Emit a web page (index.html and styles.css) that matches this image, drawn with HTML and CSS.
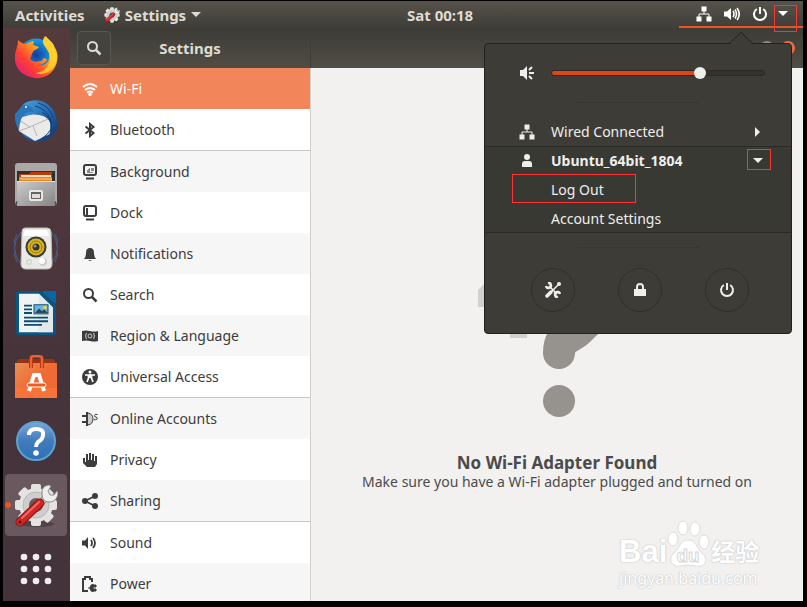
FILE: index.html
```html
<!DOCTYPE html>
<html lang="en">
<head>
<meta charset="utf-8">
<title>Settings</title>
<link rel="stylesheet" href="styles.css">
</head>
<body>
<svg class="defs" aria-hidden="true">
  <defs>
    <symbol id="gear" viewBox="0 0 44 44">
      <ellipse cx="23" cy="41" rx="17" ry="3" fill="#000" opacity=".25"/>
      <g fill="#e4e3e1">
        <circle cx="22" cy="22" r="17"/>
        <g id="teeth"><rect x="17" y="1" width="10" height="42" rx="2"/><rect x="1" y="17" width="42" height="10" rx="2"/></g>
        <use href="#teeth" transform="rotate(45 22 22)"/>
      </g>
      <circle cx="22" cy="22" r="13" fill="#cfcecd" stroke="#b9b8b6"/>
      <circle cx="22" cy="22" r="7" fill="#6a5a60"/>
      <path d="M25 22 35 11" stroke="#8e8c89" stroke-width="7"/>
      <path d="M25 22 35 11" stroke="#eeeeec" stroke-width="5"/>
      <path d="M28 11q-1-8 7-9l2 1-3 5 2 4 4 0 3-4 1 1q0 8-7 10-9 1-9-8z" fill="#eeeeec" stroke="#8e8c89"/>
      <path d="M6 39 26 20" stroke="#8d1111" stroke-width="9" stroke-linecap="round"/>
      <path d="M6 39 26 20" stroke="#cf2626" stroke-width="7" stroke-linecap="round"/>
      <path d="M8 35 25 19" stroke="#ef6a62" stroke-width="2" stroke-linecap="round"/>
      <circle cx="6" cy="39" r="1.500" fill="#6b0c0c"/>
    </symbol>
    <symbol id="net" viewBox="0 0 16 16"><path d="M5.500 0.500h5v5h-5zM0.500 10.500h5v5h-5zM10.500 10.500h5v5h-5z" fill="currentColor"/><path d="M8 5v3M3 11V8h10v3" fill="none" stroke="currentColor"/></symbol>
    <symbol id="power" viewBox="0 0 16 16"><path d="M4.800 3a6 6 0 1 0 6.400 0M8 1v7" fill="none" stroke="currentColor" stroke-width="2"/></symbol>
    <symbol id="search" viewBox="0 0 16 16"><circle cx="6.500" cy="6.500" r="4.500" fill="none" stroke="currentColor" stroke-width="2"/><path d="m10 10 4.500 4.500" stroke="currentColor" stroke-width="2.500"/></symbol>
    <symbol id="volume" viewBox="0 0 16 16"><path d="M0 5.500h3L7 2v12l-4-3.500H0z" fill="currentColor"/><path d="M9 5q2 3 0 6M11 3.500q3 4.500 0 9M13 2q4.500 6 0 12" fill="none" stroke="currentColor" stroke-width="1.600"/></symbol>
  </defs>
</svg>

<div class="screen">
  <header class="topbar">
    <div class="topbar-left">
      <button class="bar-button" type="button">Activities</button>
      <button class="bar-button app-menu" type="button"><svg class="icon"><use href="#gear"/></svg>Settings<span class="arrow-down"></span></button>
    </div>
    <button class="bar-button" type="button">Sat 00:18</button>
    <button class="status" type="button" aria-label="System menu">
      <svg class="icon"><use href="#net"/></svg>
      <svg class="icon"><use href="#volume"/></svg>
      <svg class="icon"><use href="#power"/></svg>
      <span class="arrow-down"></span>
      <span class="mark mark-status"></span>
    </button>
  </header>

  <div class="desktop">
    <nav class="dock" aria-label="Dock">
      <a href="#firefox" aria-label="Firefox"><svg viewBox="0 0 44 44">
        <defs><linearGradient id="ff" x1="1" y1="0" x2="0" y2="1"><stop offset="0" stop-color="#fff04a"/><stop offset=".35" stop-color="#ffb01e"/><stop offset=".65" stop-color="#ff4133"/><stop offset="1" stop-color="#d5118f"/></linearGradient>
        <radialGradient id="ffb"><stop offset="0" stop-color="#173a9c"/><stop offset="1" stop-color="#159fe8"/></radialGradient></defs>
        <circle cx="22" cy="20" r="16.500" fill="url(#ffb)"/>
        <path d="M4 5c2 2 5 4 8 4 3-1 5-3 8-3l-1 4c2 1 4 1 6 2-2 3-6 3-6 5-2 2-1 5-3 6 2 5 8 4 13 2l-1-1c3-2 5 0 5 1-2 3-6 6-12 5 10 3 16-4 14-12-1-7-8-8-5-14 0-1 1-2 2-3 2 4 7 5 9 12 4 6 3 15-1 21-5 8-15 11-24 8C6 39 0 31 1 21 1 15 4 13 4 5z" fill="url(#ff)"/>
        <path d="M31 1c-7 9 6 13 5 23-1 9-8 14-15 14 8 3 18-1 21-11 3-15-11-16-11-26z" fill="#ffd42e" opacity=".8"/>
      </svg></a>
      <a href="#mail" aria-label="Thunderbird"><svg viewBox="0 0 44 44">
        <defs><linearGradient id="tb" x2="1" y2="1"><stop stop-color="#49a4e0"/><stop offset=".5" stop-color="#2469b1"/><stop offset="1" stop-color="#102c61"/></linearGradient></defs>
        <path d="M10 5C17-1 30 0 37 8c8 9 7 23-1 30-7 6-19 7-26-1C0 28 2 12 10 5z" fill="url(#tb)"/>
        <path d="m2 20 17-5 18 3-1 17-15 7L5 32z" fill="#eceae8"/>
        <path d="m3 20 13 8 20-9M5 32l11-4M19 27l4 10" fill="none" stroke="#b5b2b0"/>
        <path d="M11 4c8-5 24-1 30 12 7 14-1 25-19 27 9-2 13-5 14-10 3-8-1-15-10-17-6-2-11 1-16 0C6 14 6 8 11 4z" fill="url(#tb)"/>
        <path d="M1 15 9 6q8-1 11 7-6-1-10 3-4 3-5 15-5-8-4-16z" fill="#2b75b9"/>
        <path d="M24 4c8 2 13 8 15 15M21 7c8 2 15 8 17 18M28 13c6 4 10 9 9 17M37 30q-3 6-10 10" fill="none" stroke="#0f4078"/>
        <circle cx="12" cy="8" r="1" fill="#fff"/>
      </svg></a>
      <a href="#files" aria-label="Files"><svg viewBox="0 0 44 44">
        <defs><linearGradient id="fl" x2="1" y2="1"><stop stop-color="#ccc"/><stop offset="1" stop-color="#858585"/></linearGradient></defs>
        <path d="M1 3q0-3 3-3h36q3 0 3 3v38H1z" fill="#aaa9a7"/><path d="M3 8h38v12H3z" fill="#30302f"/>
        <path d="M5 13v-2h10l2-2h21v11H5z" fill="#b93d0c"/><path d="M5 14h33v6H5z" fill="#f58220"/><path d="M7 12h30v2H7z" fill="#ffe2bd"/><path d="M6 16h32" stroke="#ffd098"/>
        <path d="M3 18h38v25H3z" fill="url(#fl)"/><path d="M3 18.500h38" stroke="#e7e7e6"/><path d="M1 41h2v-3M43 41h-2v-3" stroke="#777"/>
        <rect x="15" y="27" width="14" height="11" rx="2" fill="#e8e8e7"/><rect x="17" y="29" width="10" height="7" fill="#656462"/><path d="M18 31h8v4h-8z" fill="#dededd"/>
      </svg></a>
      <a href="#music" aria-label="Rhythmbox"><svg viewBox="0 0 44 44">
        <g fill="none" stroke="#48608e"><path d="M7 5q-13 16 0 32M3 7q-7 14 0 28M37 5q13 16 0 32M41 7q7 14 0 28"/></g>
        <path d="M11 1h22q4 0 4 4l1 32q0 5-5 5H12q-5 0-5-5L8 5q0-4 3-4z" fill="#e9e9e7" stroke="#bdbdbb"/>
        <path d="M11 3h22l2 6H9z" fill="#fff"/><circle cx="22" cy="20" r="10.500" fill="#383a37"/><circle cx="22" cy="20" r="8.500" fill="#d9b51c"/><circle cx="22" cy="20" r="6" fill="none" stroke="#96780d"/><circle cx="22" cy="20" r="3.500" fill="#333"/><circle cx="21" cy="19" r="1.500" fill="#999"/>
        <circle cx="29" cy="35" r="4" fill="#ccc"/><circle cx="28" cy="34" r="3" fill="#fff"/><rect x="13" y="33" width="4" height="4" fill="none" stroke="#ccc"/>
      </svg></a>
      <a href="#writer" aria-label="LibreOffice Writer"><svg viewBox="0 0 44 48" preserveAspectRatio="none">
        <path d="M4 0h23l15 16v29q0 3-3 3H5q-3 0-3-3V2q0-2 2-2z" fill="#0b5680"/><path d="M5 3h20l14 15v27H5z" fill="#f0f3f4"/><path d="M25 3 39 18v27H24z" fill="#dce1e4" opacity=".6"/>
        <path d="M29 0h13v14q-2 0-4-3l-8-8q-2-2-1-3z" fill="#0568a5"/>
        <path d="M10 16h8M10 20h8M10 24h8M10 29h24M10 33h24M10 37h18" stroke="#094c75" stroke-width="2"/><rect x="20" y="15" width="14" height="10" fill="#67b5de" stroke="#094c75"/><path d="m21 24 4-5 3 3 2-2 4 4z" fill="#26485a"/><circle cx="31" cy="18" r="2" fill="#f1cf45"/>
      </svg></a>
      <a href="#software" aria-label="Ubuntu Software"><svg viewBox="0 0 44 44">
        <defs><linearGradient id="sw" x1="0" x2="1" y2="1"><stop stop-color="#e99154"/><stop offset=".5" stop-color="#f16a35"/><stop offset="1" stop-color="#f26a2e"/></linearGradient></defs>
        <path d="m3 6 2-2h34l2 2v4H3z" fill="#993314"/><path d="M1 8h42v35H1z" fill="url(#sw)"/><path d="M1 33h42v10H1z" fill="#ff7b3e" opacity=".5"/>
        <path d="M17 13V4q0-3 3-3h4q4 0 4 3v9" fill="none" stroke="#bd3710" stroke-width="4"/><path d="M17 13V4q0-3 3-3h4q4 0 4 3v9" fill="none" stroke="#ee6533" stroke-width="2"/>
        <path d="m15 36 5-16h5l5 16" fill="none" stroke="#fff" stroke-width="4"/><rect x="13" y="28" width="19" height="4" rx="2" fill="#f35b1c" stroke="#fff"/>
      </svg></a>
      <a href="#help" aria-label="Help"><svg viewBox="0 0 44 44">
        <defs><linearGradient id="hp" x2="0" y2="1"><stop stop-color="#7ca6da"/><stop offset=".5" stop-color="#427bbb"/><stop offset="1" stop-color="#2b71b8"/></linearGradient></defs>
        <circle cx="22" cy="22" r="19" fill="url(#hp)" stroke="#5ca4ce" stroke-width="2"/><path d="M15 16q0-6 7-6 8 0 7 6 0 4-5 7-2 2-2 5" fill="none" stroke="#fff" stroke-width="4"/><circle cx="22" cy="34" r="2.800" fill="#fff"/>
      </svg></a>
      <a class="active" href="#settings" aria-label="Settings"><svg><use href="#gear"/></svg></a>
      <a href="#apps" aria-label="Show applications"><svg viewBox="0 0 44 44" fill="#f0eded"><g id="dots"><circle cx="10" cy="10" r="3.300"/><circle cx="22" cy="10" r="3.300"/><circle cx="34" cy="10" r="3.300"/></g><use href="#dots" y="12"/><use href="#dots" y="24"/></svg></a>
    </nav>

    <main class="window">
      <div class="titlebar">
        <div class="side-title">
          <button class="search-button" type="button" aria-label="Search"><svg class="icon"><use href="#search"/></svg></button>
          <h1>Settings</h1>
        </div>
        <div class="window-controls"><button type="button" aria-label="Maximize"></button><button class="close" type="button" aria-label="Close"></button></div>
      </div>
      <div class="panes">
        <nav class="sidebar" aria-label="Settings">
          <a class="selected" href="#wifi"><svg class="icon" viewBox="0 0 16 16"><path d="M1 6q7-6 14 0M3 9q5-4 10 0M5 11.500q3-2 6 0" fill="none" stroke="currentColor" stroke-width="1.800"/><circle cx="8" cy="13.500" r="1.800" fill="currentColor"/></svg>Wi-Fi</a>
          <a href="#bluetooth"><svg class="icon" viewBox="0 0 16 16"><path d="m3.500 4.500 8 6.500L8 14V2l3.500 3-8 6.500" fill="none" stroke="currentColor" stroke-width="2"/></svg>Bluetooth</a>
          <a class="group odd" href="#background"><svg class="icon" viewBox="0 0 16 16"><rect x="2" y="1" width="12" height="10" rx="2" fill="none" stroke="currentColor" stroke-width="2"/><path d="M4 14.500h8" stroke="currentColor" stroke-width="2"/><path d="M5 8V6h1V5h1V4h1v4zM9 4h3v3H9z" fill="#888"/><path d="M5 8.500h6" stroke="#888"/></svg>Background</a>
          <a href="#dock"><svg class="icon" viewBox="0 0 16 16"><rect x="2" y="1" width="12" height="10" rx="2" fill="none" stroke="currentColor" stroke-width="2"/><path d="M5 3v7M4 14.500h8" stroke="currentColor" stroke-width="2"/></svg>Dock</a>
          <a class="odd" href="#notifications"><svg class="icon" viewBox="0 0 16 16"><path d="M2 13q2-2 2-6 0-5 4-5t4 5q0 4 2 6zM6 14h4l-2 1z" fill="currentColor"/></svg>Notifications</a>
          <a href="#search-settings"><svg class="icon"><use href="#search"/></svg>Search</a>
          <a class="odd" href="#region"><svg class="icon" viewBox="0 0 16 16"><path d="M0 3q4-1 8 0t8 0v10q-4 1-8 0t-8 0z" fill="currentColor"/><circle cx="8" cy="8" r="2" fill="none" stroke="#ccc"/><path d="M4.500 5q-2 3 0 6M11.500 5q2 3 0 6" fill="none" stroke="#ccc"/></svg>Region &amp; Language</a>
          <a href="#access"><svg class="icon" viewBox="0 0 16 16"><circle cx="8" cy="8" r="8" fill="currentColor"/><circle cx="8" cy="3" r="1.500" fill="#fff"/><path d="M3 6h10M8 5v4M6.500 6v3L5 13M9.500 6v3l1.500 4" fill="none" stroke="#fff" stroke-width="1.700"/></svg>Universal Access</a>
          <a class="group odd" href="#accounts"><svg class="icon" viewBox="0 0 16 16"><path d="M4 1h2v14H4zM0 4h4v2H0zM0 10h4v2H0z" fill="currentColor"/><path d="M6 2q5 1 5 6t-5 6" fill="#ccc" stroke="currentColor"/><path d="M15.500 3.500q-3-1-3 1t2.500 2q1 3-3 2" fill="none" stroke="currentColor"/></svg>Online Accounts</a>
          <a href="#privacy"><svg class="icon" viewBox="0 0 16 16"><path d="M1 6h2v4h1V2h2v6h1V1h2v7h1V2h2v7h1V4h2v8l-2 3H5l-4-4z" fill="currentColor"/></svg>Privacy</a>
          <a class="odd" href="#sharing"><svg class="icon" viewBox="0 0 16 16"><g fill="currentColor"><circle cx="3" cy="8" r="3"/><circle cx="13" cy="3" r="3"/><circle cx="13" cy="13" r="3"/></g><path d="M13 3 3 8l10 5" fill="none" stroke="currentColor" stroke-width="1.800"/></svg>Sharing</a>
          <a class="group" href="#sound"><svg class="icon" viewBox="0 0 16 16"><path d="M0 5.500h3L6 2v12l-3-3.500H0z" fill="currentColor"/><path d="M9 5q2 3 0 6M11 3q4 5 0 10" fill="none" stroke="currentColor" stroke-width="1.800"/></svg>Sound</a>
          <a class="odd" href="#power-settings"><svg class="icon" viewBox="0 0 16 16"><path d="M6 15H1V3h2V1h5v2h2v3" fill="none" stroke="currentColor" stroke-width="2"/><path d="M9 12H6M11 8v8q-3-1-3-4t3-4zM11 9h3v2h-3zM11 13h3v2h-3z" fill="currentColor" stroke="currentColor"/></svg>Power</a>
        </nav>
        <section class="content">
          <svg class="illustration" viewBox="0 0 160 160" aria-hidden="true">
            <path d="M1 31 21 12v36H1zM33 40h17v39H33z" fill="#d1d0ce"/>
            <path d="M66 94c0-18 8-27 19-36 13-10 20-16 20-28H73V0h25c28 0 43 15 43 36 0 22-15 34-27 46-8 8-16 10-16 12a16 16 0 0 1-32 0z" fill="#96938f"/>
            <circle cx="82" cy="142" r="16" fill="#96938f"/>
          </svg>
          <h2>No Wi-Fi Adapter Found</h2>
          <p>Make sure you have a Wi-Fi adapter plugged and turned on</p>
        </section>
      </div>
    </main>
  </div>

  <div class="watermark">
    <div class="brand"><span>Bai</span><svg viewBox="0 0 44 48" aria-hidden="true"><g fill="#fff" stroke="#dcdcda"><ellipse cx="6" cy="19" rx="5" ry="7"/><ellipse cx="16" cy="8" rx="5" ry="7"/><ellipse cx="28" cy="9" rx="5" ry="7"/><ellipse cx="37" cy="22" rx="5" ry="7"/><path d="M21 20c8 0 9 8 14 13 8 7 2 15-6 13q-8-2-15 0c-9 2-14-7-7-13 6-5 6-13 14-13z"/></g><text x="21" y="42" text-anchor="middle">du</text></svg><span class="cjk">经验</span></div>
    <div class="domain">jingyan.baidu.com</div>
  </div>

  <section class="popup" aria-label="System menu">
    <svg class="pointer" viewBox="0 0 26 13" aria-hidden="true"><path d="M0 12.500h1L13 1l12 11.500h1V13H0z" fill="#3e3c37"/><path d="M0 11.500h1L13 .5l12 11h1" fill="none" stroke="#22211f"/></svg>
    <div class="volume-row">
      <svg class="icon" viewBox="0 0 16 16"><path d="M1 5h3l4-4v14l-4-4H1z" fill="currentColor"/><path d="M10 8h5M10 5l3-3M10 11l3 3" stroke="currentColor" stroke-width="2"/></svg>
      <input type="range" min="0" max="100" value="71" aria-label="Volume">
    </div>
    <hr>
    <button class="item" type="button"><svg class="icon"><use href="#net"/></svg><span>Wired Connected</span><i class="arrow-right"></i></button>
    <div class="user-menu">
      <button class="item user" type="button"><svg class="icon" viewBox="0 0 16 16"><circle cx="8" cy="4" r="3" fill="currentColor"/><path d="M3 14v-3q0-3 3-3h4q3 0 3 3v3z" fill="currentColor"/></svg><span>Ubuntu_64bit_1804</span><i class="arrow-down"></i><span class="mark mark-user"></span></button>
      <button class="item sub" type="button"><span>Log Out</span><span class="mark mark-logout"></span></button>
      <button class="item sub" type="button"><span>Account Settings</span></button>
    </div>
    <hr>
    <div class="actions">
      <button type="button" aria-label="Settings"><svg class="icon" viewBox="0 0 16 16"><path d="M13.500 2.500 6 10" stroke="currentColor" stroke-width="1.600"/><path d="M2 14l4-4" stroke="currentColor" stroke-width="3.500" stroke-linecap="round"/><circle cx="14" cy="2" r="2" fill="currentColor"/><path d="M4 4l8 8" stroke="currentColor" stroke-width="1.600"/><path d="M3 1a2.500 2.500 0 1 1-2 3M13 15a2.500 2.500 0 1 1 2-3" fill="none" stroke="currentColor" stroke-width="2.500"/></svg></button>
      <button type="button" aria-label="Lock"><svg class="icon" viewBox="0 0 16 16"><path d="M2 7h12v7H2z" fill="currentColor"/><path d="M5 8V5q0-3 3-3t3 3v3" fill="none" stroke="currentColor" stroke-width="2"/></svg></button>
      <button type="button" aria-label="Power off"><svg class="icon"><use href="#power"/></svg></button>
    </div>
  </section>
</div>
</body>
</html>
```
FILE: styles.css
```css
* { box-sizing: border-box; }

body {
  margin: 0;
  padding: 1px 4px 6px 3px;
  height: 100vh;
  background: #000;
  color: #3c3c3c;
  font: 14px/20px "Noto Sans", "Noto Sans CJK SC", sans-serif;
  overflow: hidden;
}

button {
  margin: 0;
  padding: 0;
  border: 0;
  background: none;
  color: inherit;
  font: inherit;
}

a { color: inherit; text-decoration: none; }
.defs { position: absolute; width: 0; height: 0; }
.icon { display: block; flex: none; width: 16px; height: 16px; }

.arrow-down { border: 5px solid transparent; border-top-color: currentColor; border-bottom: 0; }
.arrow-right { border: 5px solid transparent; border-left-color: currentColor; border-right: 0; }

.screen {
  position: relative;
  display: flex;
  flex-direction: column;
  height: 100%;
  overflow: hidden;
}

.topbar {
  display: flex;
  flex: none;
  justify-content: space-between;
  height: 27px;
  padding-left: 12px;
  background: linear-gradient(#56534b, #3e3d38);
  color: #dfdbd2;
  font-size: 15px;
  font-weight: bold;
}

.topbar-left { display: flex; gap: 19px; }
.app-menu { display: flex; align-items: center; gap: 5px; }

.status {
  position: relative;
  display: flex;
  align-items: center;
  gap: 12px;
  padding: 2px 15px 2px 17px;
  border-bottom: 2px solid #e95420;
  color: #fff;
}
.status .arrow-down { margin-left: -2px; }

.mark { position: absolute; border: 1px solid #f33; pointer-events: none; }
.mark-status { top: 4px; right: 6px; width: 23px; height: 27px; z-index: 2; }
.mark-user { top: 3px; right: 20px; width: 24px; height: 21px; }
.mark-logout { top: -1px; left: 27px; width: 124px; height: 29px; }

.desktop { display: flex; flex: 1; min-height: 0; }

.dock {
  display: flex;
  flex: none;
  flex-direction: column;
  gap: 20px;
  align-items: center;
  width: 67px;
  padding: 7px 2px 0 0;
  background: linear-gradient(#543a3c, #46343b 60%, #44333b);
}

.dock a { position: relative; flex: none; width: 44px; height: 44px; }
.dock svg { position: relative; display: block; width: 44px; height: 44px; }
.dock .active::before {
  content: "";
  position: absolute;
  inset: -9px;
  border-radius: 4px;
  background: #69585e;
}
.dock .active::after {
  content: "";
  position: absolute;
  top: 19px;
  left: -9px;
  width: 6px;
  height: 6px;
  border-radius: 50%;
  background: #e95420;
}

.window { display: flex; flex: 1; flex-direction: column; min-width: 0; }

.titlebar {
  display: flex;
  flex: none;
  justify-content: space-between;
  height: 40px;
  background: linear-gradient(#3d3c37, #504d45);
  color: #dfdbd2;
}

.side-title {
  display: grid;
  grid-template-columns: 34px 1fr 34px;
  align-items: center;
  width: 241px;
  padding: 0 7px;
  border-right: 1px solid #3f3d38;
}
.side-title h1 { margin: 0; font-size: 15px; text-align: center; }

.search-button {
  display: grid;
  place-items: center;
  height: 34px;
  border: 1px solid #5a574f;
  border-radius: 4px;
  background: #45433d;
}

.window-controls { display: flex; gap: 7px; align-items: center; padding-right: 8px; }
.window-controls button { width: 14px; height: 14px; border-radius: 50%; background: #8b8a86; }
.window-controls .close { background: #ee6b3f; }

.panes { display: flex; flex: 1; min-height: 0; }

.sidebar { flex: none; width: 241px; border-right: 1px solid #d3d0cc; background: #fff; overflow: hidden; }
.sidebar a { display: flex; gap: 12px; align-items: center; height: 41px; padding-left: 12px; }
.sidebar .odd { background: #f6f6f6; }
.sidebar .group { height: 42px; border-top: 1px solid #c8c6c4; }
.sidebar .selected { background: #f2855a; color: #fff; }

.content {
  display: flex;
  flex: 1;
  flex-direction: column;
  align-items: center;
  justify-content: center;
  padding-top: 80px;
  background: #f2f1f0;
  color: #4b4b4b;
}
.illustration { width: 160px; height: 160px; }
.content h2 { margin: 34px 0 0; font-size: 17px; line-height: 20px; }
.content p { margin: 0; line-height: 18px; }

.watermark { position: absolute; right: 41px; bottom: 13px; width: 143px; color: #fff; }
.brand { display: flex; align-items: flex-end; font: bold 31px/32px "Liberation Sans", sans-serif; }
.brand svg { flex: none; width: 44px; height: 48px; }
.brand text { fill: #fff; stroke: #d6d6d4; font: bold 19px "Liberation Sans", sans-serif; }
.brand span, .domain { text-shadow: 0 0 1px #bbb, 0 0 2px #ccc; }
.brand .cjk { font: bold 24px/34px "Noto Sans CJK SC", sans-serif; }
.domain { font-size: 16px; line-height: 20px; white-space: nowrap; }

.popup {
  position: absolute;
  top: 42px;
  right: 11px;
  width: 308px;
  border: 1px solid #22211f;
  border-radius: 4px;
  background: #3e3c37;
  color: #eeeeec;
}
.pointer { position: absolute; top: -12px; right: 37px; width: 26px; height: 13px; }

.volume-row { display: flex; gap: 16px; align-items: center; height: 58px; padding: 0 26px 0 34px; }

input[type="range"] { flex: 1; min-width: 0; height: 14px; margin: 0; appearance: none; background: none; }
input[type="range"]::-webkit-slider-runnable-track {
  height: 6px;
  border: 1px solid #2a2925;
  border-radius: 3px;
  background: linear-gradient(90deg, #dd4814 70%, #34332e 70%);
}
input[type="range"]::-webkit-slider-thumb {
  width: 12px;
  height: 12px;
  margin-top: -4px;
  appearance: none;
  border-radius: 50%;
  background: #eeeeec;
}

.popup hr { width: 122px; height: 1px; margin: 0 auto; border: 0; background: #383631; }
.popup hr + .item { margin-top: 14px; }

.item { position: relative; display: flex; gap: 16px; align-items: center; width: 100%; height: 29px; padding: 0 31px 0 34px; text-align: left; }
.item > span:not(.mark) { flex: 1; }
.user { padding-right: 28px; font-weight: bold; }
.sub { padding-left: 66px; }

.user-menu { margin-bottom: 14px; background: #393934; box-shadow: inset 0 1px #2b2a27, inset 0 -1px #2b2a27; }

.actions { display: flex; gap: 43px; justify-content: center; padding: 20px 0 21px 4px; }
.actions button { display: grid; place-items: center; width: 44px; height: 44px; border: 1px solid #302f2a; border-radius: 50%; }
```
